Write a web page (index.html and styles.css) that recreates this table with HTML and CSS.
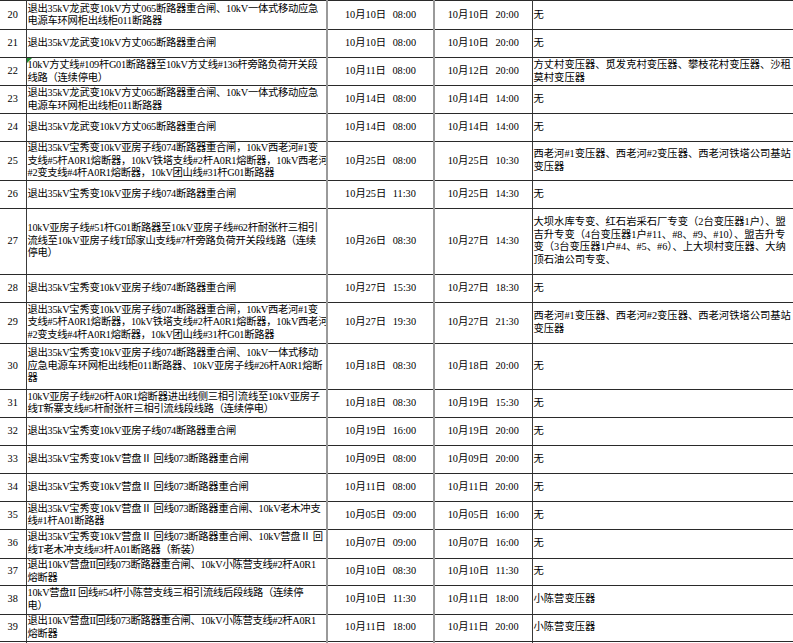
FILE: index.html
```html
<!DOCTYPE html>
<html lang="zh-CN">
<head>
<meta charset="utf-8">
<title>停电计划</title>
<link rel="stylesheet" href="styles.css">
</head>
<body>
<table class="sheet">
<colgroup>
<col class="c-no"><col class="c-desc"><col class="c-start"><col class="c-end"><col class="c-area">
</colgroup>
<tbody>
<tr class="h29"><td class="no">20</td><td class="desc">退出35kV龙武变10kV方丈065断路器重合闸、10kV一体式移动应急<br>电源车环网柜出线柜011断路器</td><td class="t s">10月10日 08:00</td><td class="t">10月10日 20:00</td><td class="area">无</td></tr>
<tr class="h28"><td class="no">21</td><td class="desc">退出35kV龙武变10kV方丈065断路器重合闸</td><td class="t s">10月10日 08:00</td><td class="t">10月10日 20:00</td><td class="area">无</td></tr>
<tr class="h28"><td class="no">22</td><td class="desc flag">10kV方丈线#109杆G01断路器至10kV方丈线#136杆旁路负荷开关段<br>线路（连续停电）</td><td class="t s">10月11日 08:00</td><td class="t">10月12日 20:00</td><td class="area">方丈村变压器、觅发克村变压器、攀枝花村变压器、沙租<br>莫村变压器</td></tr>
<tr class="h28"><td class="no">23</td><td class="desc">退出35kV龙武变10kV方丈065断路器重合闸、10kV一体式移动应急<br>电源车环网柜出线柜011断路器</td><td class="t s">10月14日 08:00</td><td class="t">10月14日 14:00</td><td class="area">无</td></tr>
<tr class="h28"><td class="no">24</td><td class="desc">退出35kV龙武变10kV方丈065断路器重合闸</td><td class="t s">10月14日 08:00</td><td class="t">10月14日 14:00</td><td class="area">无</td></tr>
<tr class="h38"><td class="no">25</td><td class="desc">退出35kV宝秀变10kV亚房子线074断路器重合闸，10kV西老河#1变<br>支线#5杆A0R1熔断器，10kV铁塔支线#2杆A0R1熔断器，10kV西老河<br>#2变支线#4杆A0R1熔断器，10kV团山线#31杆G01断路器</td><td class="t s">10月25日 08:00</td><td class="t">10月25日 10:30</td><td class="area">西老河#1变压器、西老河#2变压器、西老河铁塔公司基站<br>变压器</td></tr>
<tr class="h28"><td class="no">26</td><td class="desc">退出35kV宝秀变10kV亚房子线074断路器重合闸</td><td class="t s">10月25日 11:30</td><td class="t">10月25日 14:30</td><td class="area">无</td></tr>
<tr class="h66"><td class="no">27</td><td class="desc">10kV亚房子线#51杆G01断路器至10kV亚房子线#62杆耐张杆三相引<br>流线至10kV亚房子线T邱家山支线#7杆旁路负荷开关段线路（连续<br>停电）</td><td class="t s">10月26日 08:30</td><td class="t">10月27日 14:30</td><td class="area">大坝水库专变、红石岩采石厂专变（2台变压器1户）、盟<br>吉升专变（4台变压器1户#11、#8、#9、#10）、盟吉升专<br>变（3台变压器1户#4、#5、#6）、上大坝村变压器、大纳<br>顶石油公司专变、</td></tr>
<tr class="h28"><td class="no">28</td><td class="desc">退出35kV宝秀变10kV亚房子线074断路器重合闸</td><td class="t s">10月27日 15:30</td><td class="t">10月27日 18:30</td><td class="area">无</td></tr>
<tr class="h41"><td class="no">29</td><td class="desc">退出35kV宝秀变10kV亚房子线074断路器重合闸，10kV西老河#1变<br>支线#5杆A0R1熔断器，10kV铁塔支线#2杆A0R1熔断器，10kV西老河<br>#2变支线#4杆A0R1熔断器，10kV团山线#31杆G01断路器</td><td class="t s">10月27日 19:30</td><td class="t">10月27日 21:30</td><td class="area">西老河#1变压器、西老河#2变压器、西老河铁塔公司基站<br>变压器</td></tr>
<tr class="h46"><td class="no">30</td><td class="desc">退出35kV宝秀变10kV亚房子线074断路器重合闸、10kV一体式移动<br>应急电源车环网柜出线柜011断路器、10kV亚房子线#26杆A0R1熔断<br>器</td><td class="t s">10月18日 08:30</td><td class="t">10月18日 20:00</td><td class="area">无</td></tr>
<tr class="h28"><td class="no">31</td><td class="desc">10kV亚房子线#26杆A0R1熔断器进出线侧三相引流线至10kV亚房子<br>线T新寨支线#5杆耐张杆三相引流线段线路（连续停电）</td><td class="t s">10月18日 08:30</td><td class="t">10月19日 15:30</td><td class="area">无</td></tr>
<tr class="h28"><td class="no">32</td><td class="desc">退出35kV宝秀变10kV亚房子线074断路器重合闸</td><td class="t s">10月19日 16:00</td><td class="t">10月19日 20:00</td><td class="area">无</td></tr>
<tr class="h28"><td class="no">33</td><td class="desc">退出35kV宝秀变10kV营盘Ⅱ 回线073断路器重合闸</td><td class="t s">10月09日 08:00</td><td class="t">10月09日 20:00</td><td class="area">无</td></tr>
<tr class="h28"><td class="no">34</td><td class="desc">退出35kV宝秀变10kV营盘Ⅱ 回线073断路器重合闸</td><td class="t s">10月11日 08:00</td><td class="t">10月11日 20:00</td><td class="area">无</td></tr>
<tr class="h28"><td class="no">35</td><td class="desc">退出35kV宝秀变10kV营盘Ⅱ 回线073断路器重合闸、10kV老木冲支<br>线#1杆A01断路器</td><td class="t s">10月05日 09:00</td><td class="t">10月05日 16:00</td><td class="area">无</td></tr>
<tr class="h29"><td class="no">36</td><td class="desc">退出35kV宝秀变10kV营盘Ⅱ 回线073断路器重合闸、10kV营盘Ⅱ 回<br>线T老木冲支线#3杆A01断路器（新装）</td><td class="t s">10月07日 09:00</td><td class="t">10月07日 16:00</td><td class="area">无</td></tr>
<tr class="h27"><td class="no">37</td><td class="desc">退出10kV营盘II回线073断路器重合闸、10kV小陈营支线#2杆A0R1<br>熔断器</td><td class="t s">10月10日 08:30</td><td class="t">10月10日 11:30</td><td class="area">无</td></tr>
<tr class="h29"><td class="no">38</td><td class="desc">10kV营盘II 回线#54杆小陈营支线三相引流线后段线路（连续停<br>电）</td><td class="t s">10月10日 11:30</td><td class="t">10月11日 18:00</td><td class="area">小陈营变压器</td></tr>
<tr class="h27"><td class="no">39</td><td class="desc">退出10kV营盘II回线073断路器重合闸、10kV小陈营支线#2杆A0R1<br>熔断器</td><td class="t s">10月11日 18:00</td><td class="t">10月11日 20:00</td><td class="area">小陈营变压器</td></tr>
<tr class="h28"><td class="no">40</td><td class="desc"></td><td class="t s"></td><td class="t"></td><td class="area"></td></tr>
</tbody>
</table>
</body>
</html>
```
FILE: styles.css
```css
html, body {
  margin: 0;
  padding: 0;
  background: #ffffff;
  overflow: hidden;
}

body {
  width: 793px;
  height: 643px;
}

.sheet {
  border-collapse: collapse;
  table-layout: fixed;
  width: 793px;
  font-family: "Liberation Serif", "Noto Sans CJK SC", serif;
  font-size: 10.3px;
  line-height: 12.5px;
  color: #000000;
}

.c-no { width: 26px; }
.c-desc { width: 301px; }
.c-start { width: 107px; }
.c-end { width: 98px; }
.c-area { width: 261px; }

.sheet td {
  border-top: 1px solid #2a2a2a;
  border-bottom: 1px solid #2a2a2a;
  border-left: 1px solid #3a3a3a;
  border-right: 1px solid #3a3a3a;
  padding: 0 1px;
  vertical-align: middle;
  white-space: nowrap;
  overflow: hidden;
}

.sheet td:first-child {
  border-left: none;
}

.h27 { height: 27px; }
.h28 { height: 28px; }
.h29 { height: 29px; }
.h38 { height: 38px; }
.h41 { height: 41px; }
.h46 { height: 46px; }
.h66 { height: 66px; }

.no {
  text-align: center;
  padding: 0;
}

.desc {
  text-align: left;
  position: relative;
  letter-spacing: -0.27px;
}

.t {
  text-align: center;
  word-spacing: 4px;
}

.sheet td.s {
  border-left: 2px solid #9a9a9a;
}

.sheet td.s + td.t {
  border-left: 2px solid #9a9a9a;
}

.area {
  text-align: left;
}

.flag::before {
  content: "";
  position: absolute;
  left: 0;
  top: 0;
  width: 0;
  height: 0;
  border-top: 5px solid #1e8c2e;
  border-right: 5px solid transparent;
}
```
